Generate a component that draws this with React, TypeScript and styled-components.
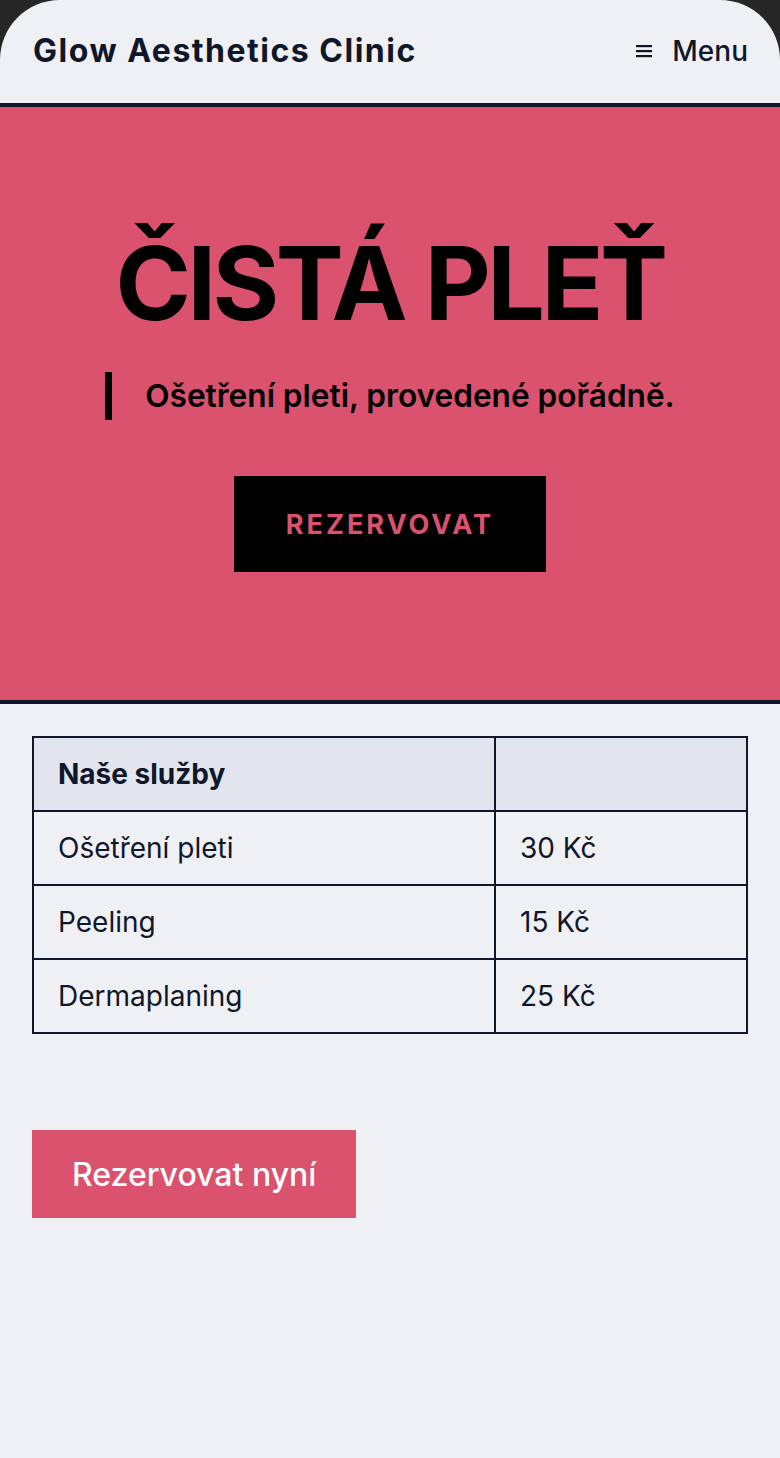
import React from "react";
import styled, { createGlobalStyle } from "styled-components";

const Global = createGlobalStyle`
  html, body { margin: 0; padding: 0; background: #262626; }
  body { font-family: Inter, "Noto Sans", sans-serif; color: #0f172a; }
  * { box-sizing: border-box; }
`;

const Page = styled.div`
  min-height: 1458px;
  background: #eff0f4;
  border-radius: 60px 60px 0 0;
  overflow: hidden;
`;

const Header = styled.header`
  height: 107px;
  display: flex;
  align-items: center;
  justify-content: space-between;
  padding: 0 32px 2px 33px;
  border-bottom: 4px solid #0f172a;
`;

const Brand = styled.div`
  font-family: Inter, sans-serif;
  font-weight: 700;
  font-size: 32px;
  letter-spacing: 1.5px;
  color: #0f172a;
`;

const MenuButton = styled.button`
  display: flex;
  align-items: center;
  gap: 20px;
  background: none;
  border: none;
  padding: 0;
  font-family: Inter, sans-serif;
  font-size: 28px;
  font-weight: 500;
  color: #0f172a;
`;

const Hero = styled.section`
  background: #db526f;
  border-bottom: 4px solid #0f172a;
  height: 597px;
  display: flex;
  flex-direction: column;
  align-items: center;
  padding-top: 114px;
`;

const Title = styled.h1`
  margin: 0;
  font-family: Inter, sans-serif;
  font-weight: 700;
  font-size: 102px;
  line-height: 125px;
  letter-spacing: -3.5px;
  color: #000;
`;

const Tagline = styled.p`
  margin: 26px 0 0;
  border-left: 7px solid #000;
  padding: 2px 0 2px 33px;
  font-family: Inter, sans-serif;
  font-weight: 600;
  font-size: 31.6px;
  line-height: 44px;
  color: #000;
`;

const HeroButton = styled.button`
  margin-top: 56px;
  width: 312px;
  height: 96px;
  background: #000;
  border: none;
  color: #db526f;
  font-family: Inter, sans-serif;
  font-weight: 700;
  font-size: 27px;
  letter-spacing: 3px;
`;

const Content = styled.main`
  padding: 32px 32px 0;
`;

const Table = styled.table`
  width: 100%;
  border-collapse: collapse;
  border: 2px solid #0f172a;
  font-family: Inter, sans-serif;
  font-size: 28px;
  color: #0f172a;
`;

const Cell = styled.td<{ $head?: boolean; $wide?: boolean }>`
  height: 74px;
  border: 2px solid #0f172a;
  padding: 0 24px;
  background: ${(p) => (p.$head ? "#e2e5ed" : "transparent")};
  font-weight: ${(p) => (p.$head ? 700 : 400)};
  width: ${(p) => (p.$wide ? "462px" : "auto")};
`;

const BookButton = styled.button`
  margin-top: 96px;
  height: 88px;
  padding: 0 40px;
  background: #db526f;
  border: none;
  color: #fff;
  font-family: Inter, sans-serif;
  font-weight: 500;
  font-size: 32px;
`;

const services = [
  { name: "Ošetření pleti", price: "30 Kč" },
  { name: "Peeling", price: "15 Kč" },
  { name: "Dermaplaning", price: "25 Kč" },
];

function Burger() {
  return (
    <svg width="16" height="14" viewBox="0 0 16 14" aria-hidden>
      <rect x="0" y="1" width="16" height="2.2" fill="#0f172a" />
      <rect x="0" y="6" width="16" height="2.2" fill="#0f172a" />
      <rect x="0" y="11" width="16" height="2.2" fill="#0f172a" />
    </svg>
  );
}

export default function App() {
  return (
    <>
      <Global />
      <Page>
        <Header>
          <Brand>Glow Aesthetics Clinic</Brand>
          <MenuButton>
            <Burger />
            Menu
          </MenuButton>
        </Header>
        <Hero>
          <Title>ČISTÁ PLEŤ</Title>
          <Tagline>Ošetření pleti, provedené pořádně.</Tagline>
          <HeroButton>REZERVOVAT</HeroButton>
        </Hero>
        <Content>
          <Table>
            <tbody>
              <tr>
                <Cell $head $wide>Naše služby</Cell>
                <Cell $head />
              </tr>
              {services.map((s) => (
                <tr key={s.name}>
                  <Cell $wide>{s.name}</Cell>
                  <Cell>{s.price}</Cell>
                </tr>
              ))}
            </tbody>
          </Table>
          <BookButton>Rezervovat nyní</BookButton>
        </Content>
      </Page>
    </>
  );
}
